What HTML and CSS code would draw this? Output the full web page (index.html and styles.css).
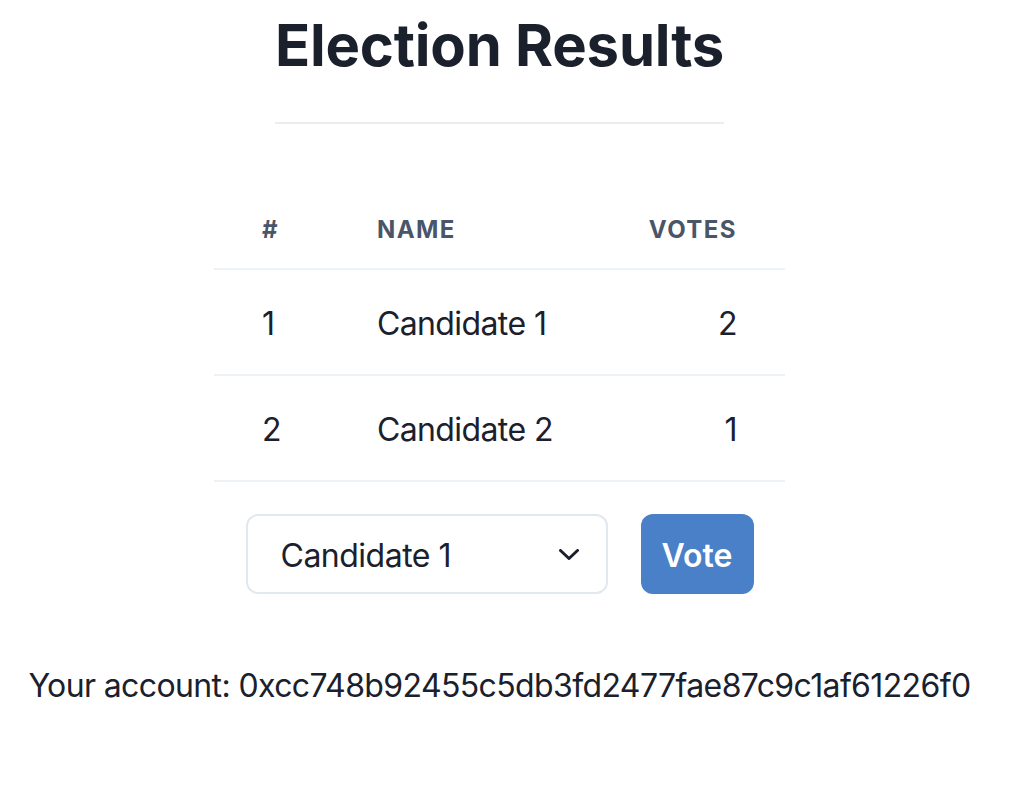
FILE: index.html
```html
<!DOCTYPE html>
<html lang="en">
<head>
<meta charset="utf-8">
<title>Election Results</title>
<link rel="stylesheet" href="styles.css">
</head>
<body>
<main class="page">
  <header class="head">
    <h1 class="title">Election Results</h1>
    <hr class="divider">
  </header>
  <table class="results">
    <thead>
      <tr><th>#</th><th>Name</th><th class="num">Votes</th></tr>
    </thead>
    <tbody>
      <tr><td>1</td><td>Candidate 1</td><td class="num">2</td></tr>
      <tr><td>2</td><td>Candidate 2</td><td class="num">1</td></tr>
    </tbody>
  </table>
  <form class="vote-form">
    <div class="select-wrap">
      <select class="select">
        <option>Candidate 1</option>
        <option>Candidate 2</option>
      </select>
      <svg class="chevron" viewBox="0 0 20 11" width="20" height="11" aria-hidden="true"><path d="M1.5 1.5 L10 9.5 L18.5 1.5" fill="none" stroke="#1A202C" stroke-width="3" stroke-linecap="round" stroke-linejoin="round"/></svg>
    </div>
    <button type="button" class="btn">Vote</button>
  </form>
  <p class="account">Your account: 0xcc748b92455c5db3fd2477fae87c9c1af61226f0</p>
</main>
</body>
</html>
```
FILE: styles.css
```css
* { box-sizing: border-box; }
html, body { margin: 0; padding: 0; background: #fff; }
body {
  font-family: Inter, "Noto Sans", sans-serif;
  color: #1A202C;
  font-size: 32px;
  line-height: 1.5;
}
.page {
  width: 999px;
  display: flex;
  flex-direction: column;
  align-items: center;
  padding-top: 9px;
}
.head {
  display: flex;
  flex-direction: column;
  align-items: stretch;
}
.title {
  margin: 0;
  font-size: 58px;
  line-height: 72px;
  font-weight: 700;
  letter-spacing: -0.2px;
  color: #1A202C;
  text-align: center;
}
.divider {
  margin: 41px 0 0;
  border: 0;
  border-top: 2px solid #EDEDED;
  height: 0;
}
.results {
  margin-top: 64px;
  border-collapse: collapse;
}
.results th {
  padding: 26px 48px 22px;
  font-size: 24px;
  line-height: 32px;
  font-weight: 700;
  letter-spacing: 0.06em;
  text-transform: uppercase;
  color: #4A5568;
  text-align: left;
  border-bottom: 2px solid #EDF2F7;
}
.results td {
  padding: 34px 48px 30px;
  line-height: 40px;
  letter-spacing: -0.6px;
  border-bottom: 2px solid #EDF2F7;
}
.results .num { text-align: right; }
.vote-form {
  margin-top: 32px;
  display: flex;
  align-items: center;
  gap: 33px;
}
.select-wrap {
  position: relative;
  width: 362px;
  height: 80px;
}
.select {
  appearance: none;
  -webkit-appearance: none;
  width: 100%;
  height: 100%;
  border: 2px solid #E2E8F0;
  border-radius: 12px;
  background: #fff;
  padding: 2px 64px 0 33px;
  font-family: inherit;
  font-size: 32px;
  letter-spacing: -0.5px;
  color: #1A202C;
}
.chevron {
  position: absolute;
  right: 29px;
  top: 35px;
  pointer-events: none;
}
.btn {
  height: 80px;
  width: 113px;
  padding: 2px 0 0;
  border: 0;
  border-radius: 12px;
  background: #4A80C8;
  color: #fff;
  font-family: inherit;
  font-size: 32px;
  font-weight: 600;
}
.account {
  margin: 68px 0 0;
  white-space: nowrap;
  letter-spacing: -0.62px;
}
```
